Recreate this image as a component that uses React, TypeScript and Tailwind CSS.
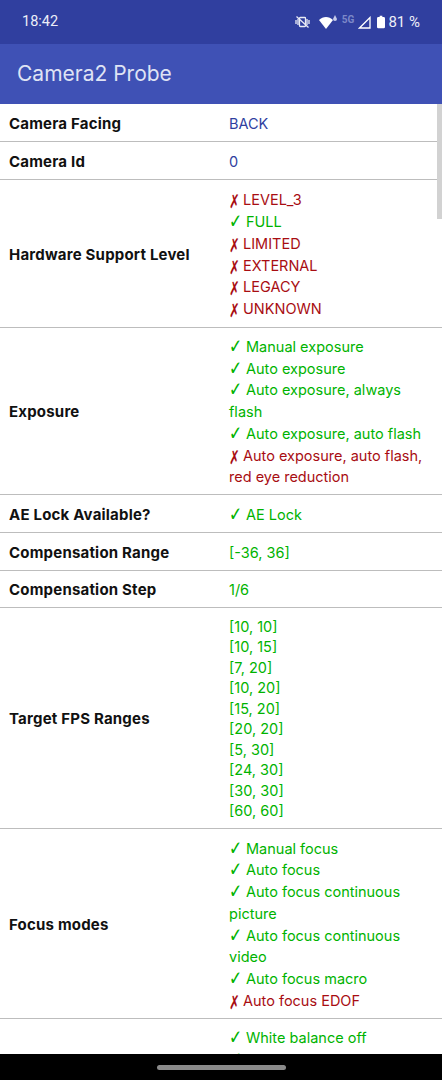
const green = "text-[#00b300]";
const red = "text-[#a80d12]";

type Item = { ok: boolean; text: string };

const yes = (text: string): Item => ({ ok: true, text });
const no = (text: string): Item => ({ ok: false, text });

const Checks = ({ items }: { items: Item[] }) => (
  <div className="text-[14.5px] leading-[21.7px]">
    {items.map((item) => (
      <div key={item.text} className={item.ok ? green : red}>
        {item.ok ? (
          <span className="inline-block h-[14px] w-[17px] origin-left translate-y-[1px] scale-x-[0.78] font-['DejaVu_Sans',sans-serif] text-[20px] leading-[14px]">✓</span>
        ) : (
          <span className="inline-block h-[14px] w-[14px] origin-left translate-y-[3px] scale-x-[0.68] font-['DejaVu_Sans',sans-serif] text-[19px] leading-[14px]">✗</span>
        )}
        {item.text}
      </div>
    ))}
  </div>
);

const Row = ({ label, h, children }: { label: string; h: string; children: React.ReactNode }) => (
  <div className={`flex items-center border-b border-[#bdbdbd] pt-[2px] ${h}`}>
    <div className="mt-[1px] w-[229px] shrink-0 pl-[9px] text-[15px] font-bold tracking-[0.2px] text-[#111111]">{label}</div>
    <div className="flex-1 pr-2">{children}</div>
  </div>
);

const Plain = ({ color, children }: { color: string; children: React.ReactNode }) => (
  <div className={`text-[14.5px] ${color}`}>{children}</div>
);

const StatusIcons = () => (
  <div className="flex items-center">
    <svg width="15" height="14" viewBox="0 0 15 14" className="mr-[9px]" fill="none" stroke="#ffffff" strokeWidth="1.3" opacity="0.9">
      <rect x="4.5" y="2.5" width="6" height="9" rx="0.8" />
      <path d="M1 5v4M3 4v6M12 4v6M14 5v4" />
      <path d="M1.5 1.5l12 11" />
    </svg>
    <svg width="14" height="13" viewBox="0 0 14 13" fill="#ffffff">
      <path d="M0 4C2 2 4.500 1 7 1c2.500 0 5 1 7 3L7 13z" />
    </svg>
    <svg width="4" height="6" viewBox="0 0 4 6" fill="#c5cae9" className="mb-[9px] mr-[5px]">
      <path d="M2 0L4 4a2 2 0 0 1-4 0z" />
    </svg>
    <span className="mb-[5px] mr-[4px] font-['Roboto',sans-serif] text-[10px] font-bold leading-none text-[#7c88c8]">5G</span>
    <svg width="13" height="13" viewBox="0 0 13 13" fill="none" stroke="#ffffff" strokeWidth="1.300" className="mr-[6px]">
      <path d="M12 1.500V12H1.500z" />
    </svg>
    <svg width="8" height="14" viewBox="0 0 9 14" fill="#ffffff" className="mr-[3px]">
      <path d="M3 0h3v1.500h1.500A1.500 1.500 0 0 1 9 3v9.500A1.500 1.500 0 0 1 7.500 14h-6A1.500 1.500 0 0 1 0 12.500V3a1.500 1.500 0 0 1 1.500-1.500H3z" />
    </svg>
    <span className="text-[15px] text-[#eceef8]">81 %</span>
  </div>
);

export default function App() {
  return (
    <div className="relative flex h-[1080px] w-[442px] flex-col overflow-hidden bg-white font-['Inter',sans-serif]">
      <div className="flex h-[44px] shrink-0 items-center justify-between bg-[#303f9f] pl-[22px] pr-[22px] font-['Roboto',sans-serif]">
        <span className="text-[14.5px] text-[#eceef8]">18:42</span>
        <StatusIcons />
      </div>
      <div className="flex h-[60px] shrink-0 items-center bg-[#3f51b5] pl-[17px] text-[21px] text-[#dfe3f4]">Camera2 Probe</div>

      <div className="relative flex-1 overflow-hidden">
        <div className="absolute right-0 top-0 h-[115px] w-[5px] bg-[#d2d2d2]" />

        <Row label="Camera Facing" h="h-[38px]">
          <Plain color="text-[#303f9f]">BACK</Plain>
        </Row>
        <Row label="Camera Id" h="h-[38px]">
          <Plain color="text-[#303f9f]">0</Plain>
        </Row>
        <Row label="Hardware Support Level" h="h-[148px]">
          <Checks items={[no("LEVEL_3"), yes("FULL"), no("LIMITED"), no("EXTERNAL"), no("LEGACY"), no("UNKNOWN")]} />
        </Row>
        <Row label="Exposure" h="h-[167px]">
          <Checks
            items={[
              yes("Manual exposure"),
              yes("Auto exposure"),
              yes("Auto exposure, always flash"),
              yes("Auto exposure, auto flash"),
              no("Auto exposure, auto flash, red eye reduction"),
            ]}
          />
        </Row>
        <Row label="AE Lock Available?" h="h-[38px]">
          <Checks items={[yes("AE Lock")]} />
        </Row>
        <Row label="Compensation Range" h="h-[38px]">
          <Plain color={green}>[-36, 36]</Plain>
        </Row>
        <Row label="Compensation Step" h="h-[37px]">
          <Plain color={green}>1/6</Plain>
        </Row>
        <Row label="Target FPS Ranges" h="h-[221px]">
          <div className={`text-[14.5px] leading-[20.5px] ${green}`}>
            {["[10, 10]", "[10, 15]", "[7, 20]", "[10, 20]", "[15, 20]", "[20, 20]", "[5, 30]", "[24, 30]", "[30, 30]", "[60, 60]"].map((r) => (
              <div key={r}>{r}</div>
            ))}
          </div>
        </Row>
        <Row label="Focus modes" h="h-[190px]">
          <Checks
            items={[
              yes("Manual focus"),
              yes("Auto focus"),
              yes("Auto focus continuous picture"),
              yes("Auto focus continuous video"),
              yes("Auto focus macro"),
              no("Auto focus EDOF"),
            ]}
          />
        </Row>
        <div className="flex pl-[229px] pt-[8px]">
          <Checks items={[yes("White balance off"), yes("Auto white balance")]} />
        </div>
      </div>

      <div className="absolute bottom-0 left-0 right-0 flex h-[26px] items-center justify-center bg-black">
        <div className="h-[5px] w-[129px] rounded-full bg-[#8a8a8a]" />
      </div>
    </div>
  );
}
